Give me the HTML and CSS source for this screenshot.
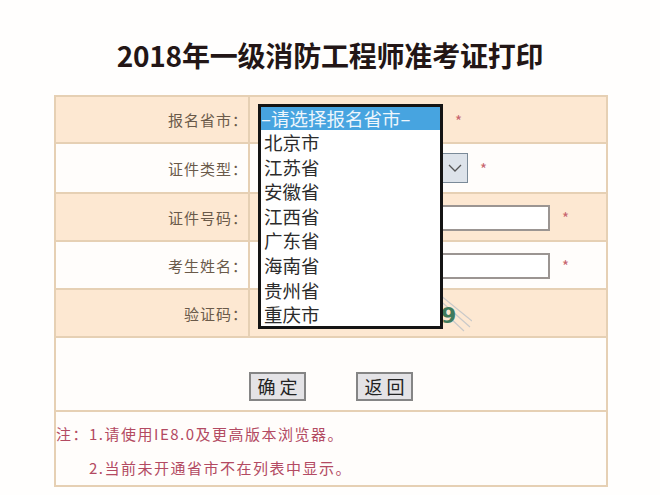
FILE: index.html
```html
<!DOCTYPE html>
<html lang="zh">
<head>
<meta charset="utf-8">
<title>2018年一级消防工程师准考证打印</title>
<link rel="stylesheet" href="styles.css">
</head>
<body>
<h1 class="title">2018年一级消防工程师准考证打印</h1>
<div class="form-wrap">
  <table class="form">
    <tr class="row peach r1">
      <td class="label">报名省市：</td>
      <td class="field"><span class="select-closed"></span><span class="star s1">*</span></td>
    </tr>
    <tr class="row white r2">
      <td class="label">证件类型：</td>
      <td class="field"><span class="select"><span class="arrow"><svg width="14" height="8" viewBox="0 0 14 8"><path d="M1 1 L7 7 L13 1" fill="none" stroke="#555" stroke-width="1.3"/></svg></span></span><span class="star">*</span></td>
    </tr>
    <tr class="row peach r3">
      <td class="label">证件号码：</td>
      <td class="field"><span class="input"></span><span class="star">*</span></td>
    </tr>
    <tr class="row white r4">
      <td class="label">考生姓名：</td>
      <td class="field"><span class="input"></span><span class="star">*</span></td>
    </tr>
    <tr class="row peach r5">
      <td class="label">验证码：</td>
      <td class="field"><span class="captcha"><svg width="214" height="40" viewBox="0 0 214 40"><path d="M178 4 L212 34 M182 2 L214 28 M176 10 L206 38" stroke="#c9c9c9" stroke-width="1.2" fill="none"/><text x="183" y="30" font-family="DejaVu Sans" font-weight="bold" font-size="22" fill="#3f7b5c">9</text></svg></span></td>
    </tr>
    <tr class="row white r6">
      <td colspan="2" class="buttons"><button class="btn">确 定</button><button class="btn">返 回</button></td>
    </tr>
    <tr class="row white r7">
      <td colspan="2" class="notes">
        <p class="note">注：1.请使用IE8.0及更高版本浏览器。</p>
        <p class="note indent">2.当前未开通省市不在列表中显示。</p>
      </td>
    </tr>
  </table>
  <div class="dropdown">
    <div class="opt selected">–请选择报名省市–</div>
    <div class="opt">北京市</div>
    <div class="opt">江苏省</div>
    <div class="opt">安徽省</div>
    <div class="opt">江西省</div>
    <div class="opt">广东省</div>
    <div class="opt">海南省</div>
    <div class="opt">贵州省</div>
    <div class="opt">重庆市</div>
  </div>
</div>
</body>
</html>
```
FILE: styles.css
```css
html, body {
  margin: 0;
  padding: 0;
  background: #fffefd;
}
body {
  font-family: "Noto Sans CJK SC", "Noto Sans", sans-serif;
  width: 660px;
  height: 495px;
  overflow: hidden;
}
.title {
  margin: 0;
  padding: 35px 0 20px;
  text-align: center;
  font-size: 28px;
  line-height: 40px;
  font-weight: 700;
  color: #231616;
  letter-spacing: -0.2px;
}
.form-wrap {
  position: relative;
  margin-left: 54px;
  width: 554px;
}
.form {
  border-collapse: collapse;
  width: 554px;
  table-layout: fixed;
}
.form td {
  border: 2px solid #e6d0b4;
  padding: 0;
  vertical-align: middle;
}
.peach td { background: #fde8d2; }
.white td { background: #fffdfb; }
.r1 { height: 47px; }
.r2 { height: 50px; }
.r3 { height: 48px; }
.r4 { height: 48px; }
.r5 { height: 48px; }
.r6 { height: 74px; }
.r7 { height: 75px; }
.label {
  width: 194px;
  box-sizing: border-box;
  text-align: right;
  padding-right: 0 !important;
  font-size: 15px;
  letter-spacing: 1px;
  color: #6a5a4a;
}
.field {
  padding-left: 8px !important;
  white-space: nowrap;
}
.field > span { display: inline-block; vertical-align: middle; }
.select-closed { width: 185px; height: 24px; }
.star {
  color: #c7646e;
  font-size: 15px;
  margin-left: 12px;
}
.select {
  width: 210px;
  height: 30px;
  border: 1px solid #7a8a98;
  background: #fff;
  box-sizing: border-box;
  position: relative;
}
.arrow {
  position: absolute;
  right: 0;
  top: 0;
  bottom: 0;
  width: 24px;
  background: #dde3ea;
  border-left: 1px solid #9aa8b4;
  display: flex;
  align-items: center;
  justify-content: center;
}
.input {
  width: 292px;
  height: 26px;
  border: 2px solid #9b9592;
  box-sizing: border-box;
  background: #fff;
}
.captcha { width: 214px; height: 40px; }
.captcha svg { display: block; }
.buttons {
  text-align: center;
  padding-top: 24px !important;
}
.btn {
  font-family: "Noto Sans CJK SC", sans-serif;
  font-size: 18px;
  line-height: 24px;
  color: #222;
  width: 57px;
  height: 29px;
  padding: 0;
  background: #e4e3e6;
  border: 2px solid #858585;
  margin: 0 25px;
  vertical-align: middle;
}
.notes {
  vertical-align: top !important;
  padding-top: 5px !important;
}
.note {
  margin: 0;
  font-size: 15px;
  line-height: 34px;
  color: #b34a62;
  letter-spacing: 1.5px;
}
.indent { padding-left: 33px; }
.dropdown {
  position: absolute;
  left: 204px;
  top: 9px;
  width: 185px;
  height: 225px;
  box-sizing: border-box;
  border: 3px solid #141414;
  background: #fff;
}
.opt {
  height: 24.6px;
  line-height: 24px;
  font-size: 18.5px;
  color: #2c2c2c;
  padding-left: 3px;
  white-space: nowrap;
}
.opt.selected {
  background: #47a4e0;
  color: #eef6fc;
  height: 23px;
  line-height: 22px;
  padding-left: 0;
}
```
